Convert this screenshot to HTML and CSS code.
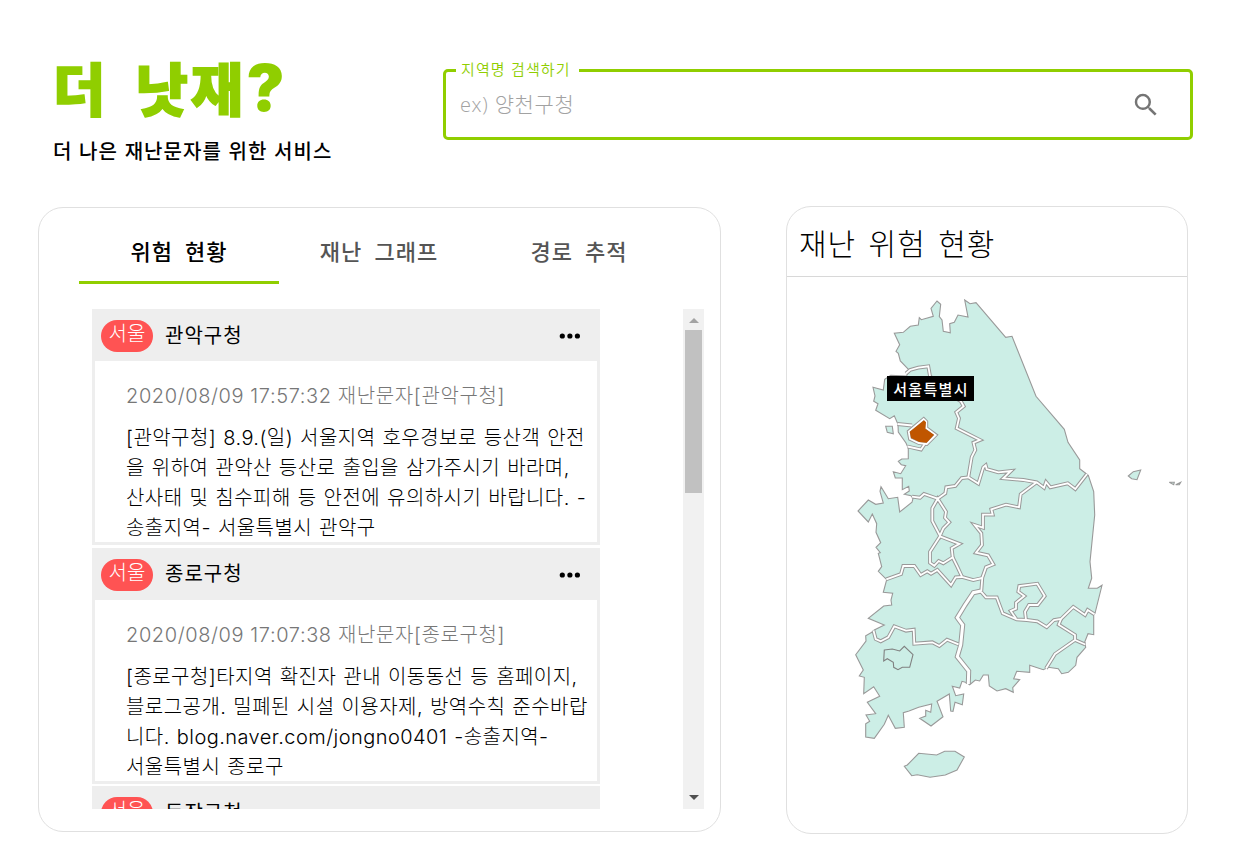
FILE: index.html
```html
<!DOCTYPE html>
<html lang="ko">
<head>
<meta charset="utf-8">
<title>더 낫재?</title>
<link rel="stylesheet" href="styles.css">
</head>
<body>
<div class="page">
  <header class="header">
    <div class="brand">
      <h1 class="logo">더 낫재<span class="mark">?</span></h1>
      <p class="tagline">더 나은 재난문자를 위한 서비스</p>
    </div>
    <div class="search">
      <span class="search-label">지역명 검색하기</span>
      <span class="search-hint"><span class="hint-latin">ex)</span> 양천구청</span>
      <svg class="search-icon" viewBox="0 0 24 24"><path d="M15.5 14h-.79l-.28-.27A6.471 6.471 0 0 0 16 9.5 6.5 6.5 0 1 0 9.5 16c1.61 0 3.09-.59 4.23-1.57l.27.28v.79l5 4.99L20.49 19l-4.99-5zm-6 0C7.01 14 5 11.99 5 9.5S7.01 5 9.5 5 14 7.01 14 9.5 11.99 14 9.5 14z"/></svg>
    </div>
  </header>
  <main class="content">
    <section class="panel feed">
      <nav class="tabs">
        <span class="tab active">위험 현황</span>
        <span class="tab">재난 그래프</span>
        <span class="tab">경로 추적</span>
      </nav>
      <div class="scroller">
        <div class="cards">
          <article class="card">
            <div class="card-head"><span class="badge">서울</span><span class="sender">관악구청</span><svg class="more" viewBox="0 0 22 6"><circle cx="3.3" cy="3" r="2.6"/><circle cx="10.9" cy="3" r="2.6"/><circle cx="18.4" cy="3" r="2.6"/></svg></div>
            <div class="card-body">
              <div class="stamp">2020/08/09 17:57:32 재난문자[관악구청]</div>
              <div class="message"><div class="line a1">[관악구청] 8.9.(일) 서울지역 호우경보로 등산객 안전</div><div class="line a2">을 위하여 관악산 등산로 출입을 삼가주시기 바라며,</div><div class="line a3">산사태 및 침수피해 등 안전에 유의하시기 바랍니다. -</div><div class="line a4">송출지역- 서울특별시 관악구</div></div>
            </div>
          </article>
          <article class="card">
            <div class="card-head"><span class="badge">서울</span><span class="sender">종로구청</span><svg class="more" viewBox="0 0 22 6"><circle cx="3.3" cy="3" r="2.6"/><circle cx="10.9" cy="3" r="2.6"/><circle cx="18.4" cy="3" r="2.6"/></svg></div>
            <div class="card-body">
              <div class="stamp">2020/08/09 17:07:38 재난문자[종로구청]</div>
              <div class="message"><div class="line b1">[종로구청]타지역 확진자 관내 이동동선 등 홈페이지,</div><div class="line b2">블로그공개. 밀폐된 시설 이용자제, 방역수칙 준수바랍</div><div class="line b3">니다. blog.naver.com/jongno0401 -송출지역-</div><div class="line b4">서울특별시 종로구</div></div>
            </div>
          </article>
          <article class="card">
            <div class="card-head"><span class="badge">서울</span><span class="sender">동작구청</span></div>
          </article>
        </div>
        <div class="scrollbar"><i class="arrow up"></i><i class="thumb"></i><i class="arrow down"></i></div>
      </div>
    </section>
    <section class="panel status">
      <h2 class="status-title">재난 위험 현황</h2>
      <div class="map-area">
        <svg class="map" viewBox="787 277 400 556">
          <g class="land">
            <path d="M908.7 369.7L900.3 361 898.3 353.3 896 351.3 899.7 344.7 894.3 333.3 903.3 332.3 910.3 326.3 918.3 325 919.3 317.7 921.3 319.7 933.3 316.3 931 308.3 937 301 940.7 304.3 939.3 316.7 942 320 943.3 331.3 950.3 332.7 949.7 323.7 954.3 322.3 958 315 968 317 964.7 300 970 303.7 976 302.7 1005.7 337.3 1012 336.3 1036 396.3 1064.3 429.3 1068 442.3 1079.7 460V468.7L1085.3 473 1088.3 475.3 1093.7 491.7 1094.7 515 1090 561.7 1091.7 578.3 1088.3 588.3H1097.3L1102 585.3 1095 613.3 1093.7 614.3V634.7L1088 633.7 1084.7 642 1085.7 647.3 1077 657.3 1075.7 665.3 1068.3 672.3 1061.7 673.7 1058.3 668.7 1048.3 667.3 1043.3 669.7 1029.7 665.3V672.3L1016.7 671.3 1013.7 678.7 1019.7 679.7 1012.7 687.7 1013.3 692.3 1005.7 688.7 997 691 989.3 686 988.3 675H983.3L979.7 681 975.3 680 969.7 684.7 967 682.7 962 681.3 959.7 688 952.3 686.3 955.7 695.7 963.7 694 962.3 704.7 955 702.3 953 711.3 950.7 711 949.3 694 937 701.3 943 716.7 931 726 919.7 718.3 925.7 716V710.3L930.7 712.3 931.7 704 918.7 707.3 909 711 903.3 712.7 904.3 727.3 895.3 728.3 888.3 715.3 884.3 724.3 874.3 738.3 865.7 737V723.7L869.7 721.3 866 715 875.7 713.7 867.3 702.3 879.7 696.3 873.7 686.7 863.7 693.7 864.3 677.3 859.3 676 863.3 670 855.7 654.7 866 641 865.7 635.7 872.3 632 874.3 630 884.3 625 868.3 618.3 883.7 606 891.7 605 891 600 892.7 593.3 883.3 592.3 886.7 579.7 878.3 571.3 881.7 566.7 878.3 553.3 880.3 552.7 876 547.3 880.7 542.7 876 532.3 876.7 523.7 872.3 514 868.3 522 858 511 868.3 500 875.7 504.3 883.3 503 880 491.3 881 486.7 888.3 498.7 897.7 497.3 899.7 512 912 502.3 913 498.3 911 495.7 904.3 494.3 909.3 491 908.7 486.3 902.3 489.7V478H895.3L893.3 471.7 900.7 473.7 905.7 465.7 901.3 464.7 898.3 461.3 901.7 459 908.3 458.7V448.3L906 443 898.3 432 898 424.3 894.3 415.7 889.7 418.7 875.7 410.3 878 403.7 873.7 401.3 875 396 873 387.3 883.3 390 884.7 379.3 890.7 375.3 906.7 376Z"/>
            <path d="M885.7 426.3H892.3L893.3 433.7 887.3 432.3Z"/>
            <path d="M904.3 766.3L907.3 765 918.7 753.3 936.7 755 944.7 751.3H955L964.3 757 957 770 945.3 775 930 777.3 917.3 774.7 911.7 775.7Z"/>
            <path d="M1128.3 476L1133.3 471.7 1140.7 470 1137 479.7 1131.7 478.7Z"/>
            <path d="M1169.3 482.3H1174.3L1173.7 484.7ZM1175.7 484.7L1180.7 482.3 1179.3 484.7Z"/>
            <path class="inner" d="M884.3 650L892.3 649 899.7 651 904.3 646.3 913 654.7 909.7 667.3H902.3L898 669.7 893.7 667.3 893.3 662.3 887.3 658.7 883.7 661Z"/>
          </g>
          <defs>
            <g id="borders">
              <path d="M906 373.5L910 370 918.3 367.7 928.3 366.3 930 376 945 392 960.7 401 963.7 406.3 956.3 412.3 959 418.3 956.7 428.3 980 440 973.5 442.7 975.3 450 971.7 457 968.3 477.3"/>
              <path d="M968.3 477.3L961.7 478 955.3 486 946.3 487.3 945.3 493.3 937.7 498.7 924 494 920 497.7 912 496.7"/>
              <path d="M968.3 477.3L978.3 483.5 983.3 467.3 985.7 465.3 986.7 469 998.3 472.3 1011 471 1003.3 478.3 1023.3 480 1036.7 482.3 1044 487.7 1046 482 1050.3 487.3 1067.7 483.3 1075.3 489 1087 474"/>
              <path d="M1036.7 482.3L1020.7 494.3 1019 507.3 1006 504.7 991.3 509.3 992.7 514.7H983V527.7L974.7 525 981.3 533.3 982 545 976 552.7 988 555.3 993.3 564.3 986 567.3 982.3 577.7 981.3 591"/>
              <path d="M937.7 498.7L932.3 508.3V521L940 535.7 943.3 528.3 949.3 522.3 945 517.7 946 511.7Z"/>
              <path d="M940 536.3L930 551.7V562.7L934.3 565.7 938.7 561 943.3 563.3 952.7 557.3 951.7 548.3 959.5 543.9Z"/>
              <path d="M952.7 557.3L957.3 566.7 962 576.7"/>
              <path d="M886.3 579.3L901 574 903.3 566H914.3L920.7 575 927.3 571.3 931 573.7 937.3 570 951 585 955.7 577.3 962 577 973.3 580 982.3 578"/>
              <path d="M873.5 630.5L875.7 639 880.7 641.3 888.3 637.3 894.3 626.3 906 630.7 913.7 629.7 914.3 643.7 932.3 642.3 939.3 646 947 639.7 958.5 644.3"/>
              <path d="M981 591.7L986 597.3H996.7L1002.7 613.3 1016.7 619.3 1026.7 620 1037.3 621.3 1046.7 627 1054 620 1061 619 1073.3 607 1085 615 1087.7 610 1094.5 614.3"/>
              <path d="M1016 618.5L1010.7 611 1016 608.7V602.7L1024.3 596 1018.3 591.7 1019.3 586 1037.3 583.7 1044.7 596 1037.7 605H1029L1025 611.7 1026 620"/>
              <path d="M1061 619L1058.7 624.7 1075 635V640L1085.3 644.5M1075 640L1055 654 1046 668.5"/>
              <path d="M897.5 424L912 425.5M907.5 446.5L921 449.5 925 443.5"/>
              <path d="M923.7 419L926.3 421.7V428L935.7 435 926.7 444 918.7 443 910 439 908.7 431.5Z"/>
            </g>
            <path id="divide" d="M981 591L973.3 592.7 965 605 957.3 617.7 962.7 625 960.7 645 957.3 656.7 968.7 671 968.3 684"/>
          </defs>
          <use href="#borders" class="edge"/>
          <use href="#divide" class="edge wide"/>
          <use href="#borders" class="gap"/>
          <use href="#divide" class="gap wide"/>
          <path class="selected" d="M924 420.3L926 422.3 925.3 428.7 934 434.7 926.7 442.7 919.3 442 911 438 909.7 431.7Z"/>
        </svg>
        <span class="tooltip">서울특별시</span>
      </div>
    </section>
  </main>
</div>
</body>
</html>
```
FILE: styles.css
```css
* { box-sizing: border-box; }
body {
  margin: 0;
  background: #fff;
  color: #000;
  font-family: "Noto Sans CJK KR", sans-serif;
}
.page { width: 1244px; height: 868px; overflow: hidden; }
.header { display: flex; height: 206px; padding: 51px 51px 0 53px; }
.brand { width: 390px; }
.logo {
  margin: 0;
  color: #90ce00;
  font-size: 57px;
  font-weight: 900;
  line-height: 70px;
  letter-spacing: 3px;
  word-spacing: 8px;
  white-space: nowrap;
  -webkit-text-stroke: 1.5px #90ce00;
}
.mark { font-family: Inter, sans-serif; font-size: 64px; line-height: 1; -webkit-text-stroke: 0; }
.tagline {
  margin: 15px 0 0;
  font-size: 20px;
  font-weight: 500;
  line-height: 30px;
  letter-spacing: 1.05px;
  white-space: nowrap;
}
.search {
  position: relative;
  display: flex;
  align-items: center;
  justify-content: space-between;
  width: 750px;
  height: 71px;
  margin-top: 18px;
  padding: 0 29px 0 14px;
  border: 3px solid #90ce00;
  border-radius: 5px;
}
.search-label {
  position: absolute;
  top: -15px;
  left: 10px;
  width: 123px;
  padding-left: 5px;
  background: #fff;
  color: #90ce00;
  font-size: 15px;
  font-weight: 350;
  line-height: 24px;
  letter-spacing: 1.1px;
  white-space: nowrap;
}
.search-hint { margin-top: -2px; color: #a2a2a2; font-size: 21px; font-weight: 300; line-height: 30px; letter-spacing: .6px; }
.hint-latin { font-family: "Open Sans", sans-serif; font-size: 20px; }
.search-icon { width: 30px; height: 30px; fill: #757575; }
.content { display: flex; gap: 65px; padding-left: 38px; }
.panel { border: 1px solid #e0e0e0; border-radius: 25px; }
.feed { width: 683px; height: 625px; margin-top: 1px; }
.tabs { display: flex; height: 76px; margin-left: 40px; }
.tab {
  width: 200px;
  padding-top: 24px;
  color: #555;
  font-size: 22px;
  font-weight: 500;
  line-height: 36px;
  letter-spacing: 1px;
  word-spacing: 5px;
  text-align: center;
}
.tab.active { border-bottom: 3px solid #90ce00; color: #000; }
.scroller {
  display: flex;
  justify-content: space-between;
  height: 500px;
  margin: 25px 16px 0 53px;
  overflow: hidden;
}
.cards { width: 508px; }
.card { height: 236px; margin-bottom: 2.5px; border: 3px solid #eee; border-top: 0; }
.card-head { display: flex; align-items: center; height: 52px; margin: 0 -3px; padding: 2px 19px 0 9px; background: #eee; }
.badge {
  width: 52px;
  height: 32px;
  border-radius: 16px;
  background: #ff5353;
  color: #fff;
  font-size: 20px;
  font-weight: 300;
  line-height: 26px;
  text-align: center;
}
.sender { margin: -4px 0 0 12px; font-size: 20px; font-weight: 400; letter-spacing: 1px; }
.more { width: 22px; height: 6px; margin-left: auto; }
.card-body {
  padding: 20px 0 0 31px;
  font-family: Inter, "Noto Sans CJK KR", sans-serif;
  font-weight: 300;
  white-space: nowrap;
}
.stamp { color: #777; font-size: 20px; line-height: 30px; letter-spacing: .6px; }
.message { margin-top: 12px; font-size: 20px; line-height: 30px; letter-spacing: .45px; word-spacing: .9px; }
.scrollbar {
  display: flex;
  flex-direction: column;
  align-items: center;
  width: 21px;
  height: 500px;
  padding: 9px 0;
  background: #f1f1f1;
}
.arrow { border: 5px solid transparent; border-top: 0; border-bottom-color: #a3a3a3; }
.arrow.down { margin-top: auto; border-top: 5px solid #505050; border-bottom: 0; }
.thumb { width: 17px; height: 163px; margin-top: 7px; background: #c1c1c1; }
.status { width: 402px; height: 628px; }
.status-title {
  height: 70px;
  margin: 0;
  padding-left: 12px;
  border-bottom: 1px solid #d8d8d8;
  font-size: 30px;
  font-weight: 300;
  line-height: 70px;
  letter-spacing: 1px;
  word-spacing: 3px;
}
.map-area { position: relative; }
.map { display: block; width: 400px; height: 556px; }
.land { fill: #cceee6; stroke: #999; stroke-width: 1.1; }
.inner { stroke: #808080; }
.edge { fill: none; stroke: #999; stroke-width: 3.8; }
.edge.wide { stroke-width: 5; }
.gap { fill: none; stroke: #fff; stroke-width: 1.8; }
.gap.wide { stroke-width: 3; }
.selected { fill: #c05600; }
.tooltip {
  position: absolute;
  left: 100px;
  top: 99px;
  width: 87px;
  height: 25px;
  background: #000;
  color: #fff;
  font-size: 15px;
  font-weight: 500;
  line-height: 25px;
  letter-spacing: 1.3px;
  text-indent: 1px;
  text-align: center;
}
```
